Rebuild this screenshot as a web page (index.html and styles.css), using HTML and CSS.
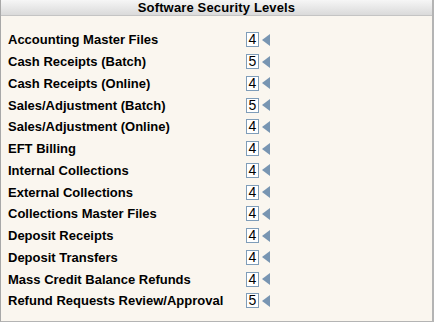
FILE: index.html
```html
<!DOCTYPE html>
<html>
<head>
<meta charset="utf-8">
<link rel="stylesheet" href="styles.css">
</head>
<body>
<div class="panel">
  <div class="panel-head">Software Security Levels</div>
  <div class="panel-body">
    <div class="row"><span class="label">Accounting Master Files</span><span class="level">4</span><span class="arrow"></span></div>
    <div class="row"><span class="label">Cash Receipts (Batch)</span><span class="level">5</span><span class="arrow"></span></div>
    <div class="row"><span class="label">Cash Receipts (Online)</span><span class="level">4</span><span class="arrow"></span></div>
    <div class="row"><span class="label">Sales/Adjustment (Batch)</span><span class="level">5</span><span class="arrow"></span></div>
    <div class="row"><span class="label">Sales/Adjustment (Online)</span><span class="level">4</span><span class="arrow"></span></div>
    <div class="row"><span class="label">EFT Billing</span><span class="level">4</span><span class="arrow"></span></div>
    <div class="row"><span class="label">Internal Collections</span><span class="level">4</span><span class="arrow"></span></div>
    <div class="row"><span class="label">External Collections</span><span class="level">4</span><span class="arrow"></span></div>
    <div class="row"><span class="label">Collections Master Files</span><span class="level">4</span><span class="arrow"></span></div>
    <div class="row"><span class="label">Deposit Receipts</span><span class="level">4</span><span class="arrow"></span></div>
    <div class="row"><span class="label">Deposit Transfers</span><span class="level">4</span><span class="arrow"></span></div>
    <div class="row"><span class="label">Mass Credit Balance Refunds</span><span class="level">4</span><span class="arrow"></span></div>
    <div class="row"><span class="label">Refund Requests Review/Approval</span><span class="level">5</span><span class="arrow"></span></div>
  </div>
</div>
</body>
</html>
```
FILE: styles.css
```css
html, body {
  margin: 0;
  padding: 0;
  background: #ffffff;
}
body {
  width: 434px;
  height: 324px;
  overflow: hidden;
  font-family: "Liberation Sans", Arial, sans-serif;
}
.panel {
  box-sizing: border-box;
  width: 434px;
  height: 322px;
  border-left: 1px solid #a8a8a8;
  border-right: 2px solid #b4b4b4;
  border-bottom: 1px solid #b4b4b4;
  background: #faf6ef;
  display: flex;
  flex-direction: column;
}
.panel-head {
  height: 15px;
  line-height: 16px;
  border-bottom: 1px solid #c4c4c4;
  background: linear-gradient(#f6f6f6, #dadada);
  text-align: center;
  font-weight: bold;
  font-size: 13px;
  letter-spacing: 0.15px;
  color: #000;
}
.panel-body {
  padding: 13px 0 0 7px;
  display: flex;
  flex-direction: column;
}
.row {
  height: 21.75px;
  display: flex;
  align-items: center;
}
.label {
  width: 238px;
  font-weight: bold;
  font-size: 13px;
  color: #000;
}
.level {
  box-sizing: border-box;
  width: 13px;
  height: 15px;
  border: 1px solid #7f9db9;
  background: #fff;
  font-size: 14px;
  line-height: 13px;
  text-align: center;
  color: #000;
}
.arrow {
  margin-left: 3px;
  width: 0;
  height: 0;
  border-top: 6px solid transparent;
  border-bottom: 6px solid transparent;
  border-right: 8px solid #7895b2;
}
```
